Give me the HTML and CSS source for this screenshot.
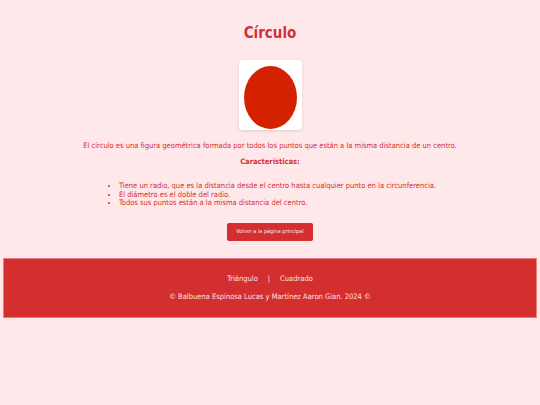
FILE: index.html
```html
<!DOCTYPE html>
<html lang="es">
<head>
<meta charset="utf-8">
<title>Círculo</title>
<link rel="stylesheet" href="styles.css">
</head>
<body>
<main class="content">
  <h1 class="title">Círculo</h1>
  <div class="figure-card">
    <div class="circle"></div>
  </div>
  <p class="desc">El círculo es una figura geométrica formada por todos los puntos que están a la misma distancia de un centro.</p>
  <p class="subtitle">Características:</p>
  <ul class="features">
    <li>Tiene un radio, que es la distancia desde el centro hasta cualquier punto en la circunferencia.</li>
    <li>El diámetro es el doble del radio.</li>
    <li>Todos sus puntos están a la misma distancia del centro.</li>
  </ul>
  <a class="btn" href="#">Volver a la página principal</a>
</main>
<footer class="footer">
  <nav class="footer-nav"><a href="#">Triángulo</a><span class="sep">|</span><a href="#">Cuadrado</a></nav>
  <p class="copy">© Balbuena Espinosa Lucas y Martínez Aaron Gian. 2024 ©</p>
</footer>
</body>
</html>
```
FILE: styles.css
```css
html, body { margin: 0; padding: 0; }
body {
  background: #ffe8ea;
  font-family: "DejaVu Sans Condensed", "DejaVu Sans", Verdana, sans-serif;
  font-stretch: condensed;
  color: #d32f2f;
  font-size: 7.5px;
  padding: 0 3px;
}
.content {
  display: flex;
  flex-direction: column;
  align-items: center;
  padding-top: 24px;
}
.title {
  margin: 0;
  font-size: 15px;
  font-weight: bold;
  line-height: 18px;
  color: #d0303a;
}
.figure-card {
  margin-top: 18px;
  width: 53px;
  height: 63px;
  padding: 6px 5px 1px;
  background: #fff;
  border-radius: 4px;
  box-shadow: 0 1px 3px rgba(0,0,0,0.12);
}
.circle {
  width: 100%;
  height: 100%;
  border-radius: 50%;
  background: #d42200;
}
.desc { margin: 11px 0 0; line-height: 10px; }
.subtitle { margin: 6px 0 0; font-weight: bold; line-height: 10px; }
.features {
  margin: 15px 0 0;
  padding-left: 15px;
  line-height: 8.5px;
}
.btn {
  margin-top: 15px;
  background: #d32f2f;
  color: #fde4e6;
  text-decoration: none;
  font-size: 5.5px;
  padding: 6px 9px 7px;
  border-radius: 2px;
  line-height: 5px;
}
.footer {
  margin-top: 17px;
  background: #d32f2f;
  border: 1px solid #ec7a80;
  color: #ffe0e0;
  text-align: center;
  padding: 15px 0 15px;
}
.footer-nav a { color: #ffe0e0; text-decoration: none; }
.sep { margin: 0 10px; }
.footer-nav { line-height: 10px; }
.copy { margin: 8px 0 0; line-height: 10px; }
```
